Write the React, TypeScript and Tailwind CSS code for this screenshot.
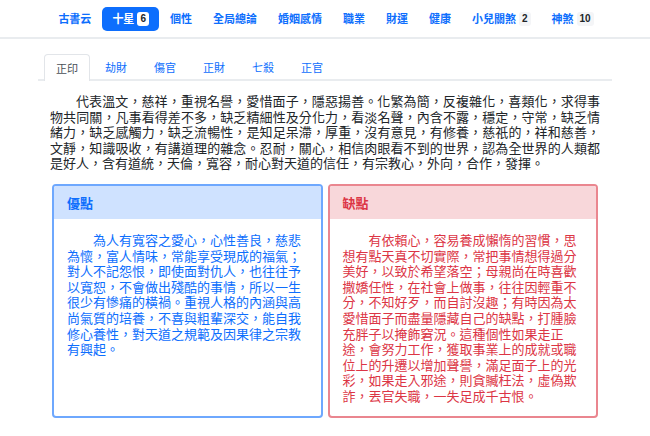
const navItems: { label: string; badge?: string; active?: boolean }[] = [
  { label: '古書云' },
  { label: '十星', badge: '6', active: true },
  { label: '個性' },
  { label: '全局總論' },
  { label: '婚姻感情' },
  { label: '職業' },
  { label: '財運' },
  { label: '健康' },
  { label: '小兒關煞', badge: '2' },
  { label: '神煞', badge: '10' },
];

const tabs = ['正印', '劫財', '傷官', '正財', '七殺', '正官'];

const intro =
  '代表溫文，慈祥，重視名譽，愛惜面子，隱惡揚善。化繁為簡，反複雜化，喜類化，求得事物共同關，凡事看得差不多，缺乏精細性及分化力，看淡名聲，內含不露，穩定，守常，缺乏情緒力，缺乏感觸力，缺乏流暢性，是知足呆滯，厚重，沒有意見，有修養，慈祇的，祥和慈善，文靜，知識吸收，有講道理的雜念。忍耐，關心，相信肉眼看不到的世界，認為全世界的人類都是好人，含有道統，天倫，寬容，耐心對天道的信任，有宗教心，外向，合作，發揮。';

const pros =
  '為人有寬容之愛心，心性善良，慈悲為懷，富人情味，常能享受現成的福氣；對人不記怨恨，即使面對仇人，也往往予以寬恕，不會做出殘酷的事情，所以一生很少有慘痛的橫禍。重視人格的內涵與高尚氣質的培養，不喜與粗輩深交，能自我修心養性，對天道之規範及因果律之宗教有興起。';

const cons =
  '有依賴心，容易養成懶惰的習慣，思想有點天真不切實際，常把事情想得過分美好，以致於希望落空；母親尚在時喜歡撒嬌任性，在社會上做事，往往因輕重不分，不知好歹，而自討沒趣；有時因為太愛惜面子而盡量隱藏自己的缺點，打腫臉充胖子以掩飾窘況。這種個性如果走正途，會努力工作，獲取事業上的成就或職位上的升遷以增加聲譽，滿足面子上的光彩，如果走入邪途，則貪贓枉法，虛偽欺詐，丟官失職，一失足成千古恨。';

export default function App() {
  return (
    <div className="min-h-[436px] bg-white font-['Noto_Sans_CJK_TC','Liberation_Sans',sans-serif] text-[#212529]">
      {/* top nav */}
      <nav className="flex h-[39px] items-center justify-center gap-[1px] border-b-2 border-[#e9ecef] pl-[2px]">
        {navItems.map((item) => (
          <div
            key={item.label}
            className={`flex h-[24px] items-center gap-[3px] rounded-[5px] px-[10px] text-[11px] font-bold leading-none ${
              item.active ? 'bg-[#0d6efd] text-white' : 'text-[#0d6efd]'
            }`}
          >
            <span>{item.label}</span>
            {item.badge && (
              <span
                className={`rounded-[3px] px-[3px] py-[2px] font-['Liberation_Sans',sans-serif] text-[10px] font-bold text-[#212529] ${
                  item.active ? 'bg-white' : 'bg-[#f4f5f7]'
                }`}
              >
                {item.badge}
              </span>
            )}
          </div>
        ))}
      </nav>

      <div className="mx-[38px] mt-[15px]">
        {/* tabs */}
        <div className="flex gap-[3px] border-b-2 border-[#e9ecef] pl-[6px]">
          {tabs.map((t, i) => (
            <div
              key={t}
              className={`-mb-[2px] flex h-[27px] items-center rounded-t-[4px] px-[11px] text-[11px] leading-none ${
                i === 0
                  ? 'border border-b-0 border-[#e2e5e9] bg-white text-[#495057]'
                  : 'border border-transparent text-[#0d6efd]'
              }`}
            >
              {t}
            </div>
          ))}
        </div>

        {/* intro */}
        <p className="mt-[12px] px-[12px] text-justify indent-[2em] text-[13px] leading-[15.6px]">
          {intro}
        </p>

        {/* pros / cons */}
        <div className="mx-[14px] mt-[13px] grid grid-cols-2 gap-[5px]">
          <div className="flex flex-col overflow-hidden rounded-[4px] border-2 border-[#6ea8fe]">
            <div className="flex h-[33px] items-center bg-[#cfe2ff] px-[13px] text-[13px] font-bold text-[#0d6efd]">
              優點
            </div>
            <p className="px-[13px] pb-3 pt-[13px] indent-[2em] text-[13px] leading-[15.6px] text-[#0d6efd]">
              {pros}
            </p>
          </div>
          <div className="flex flex-col overflow-hidden rounded-[4px] border-2 border-[#ea868f]">
            <div className="flex h-[33px] items-center bg-[#f8d7da] px-[13px] text-[13px] font-bold text-[#dc3545]">
              缺點
            </div>
            <p className="px-[13px] pb-3 pt-[13px] indent-[2em] text-[13px] leading-[15.6px] text-[#dc3545]">
              {cons}
            </p>
          </div>
        </div>
      </div>
    </div>
  );
}
